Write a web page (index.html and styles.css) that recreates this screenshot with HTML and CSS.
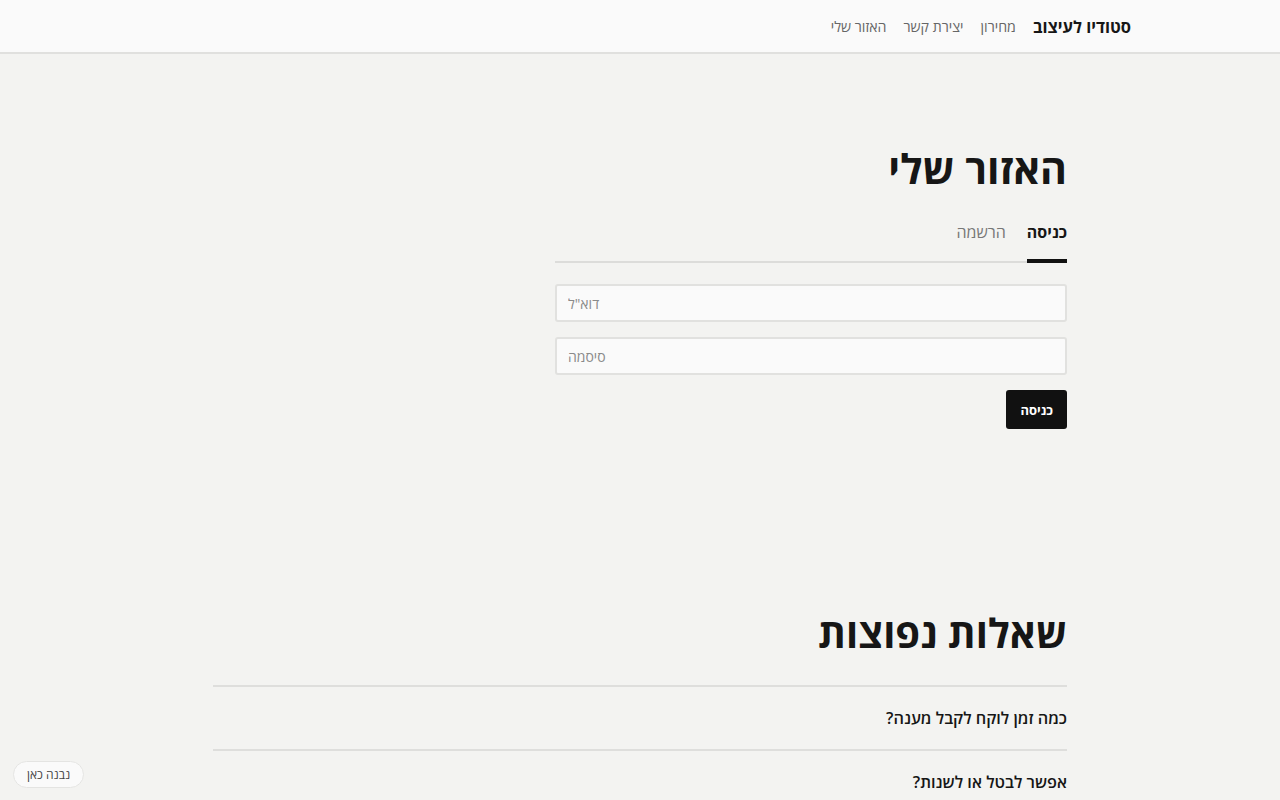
FILE: index.html
```
<!DOCTYPE html>
<html lang="he" dir="rtl">
<head>
    <meta charset="UTF-8">
    <title>האזור שלי - סטודיו לעיצוב</title>
    <link rel="stylesheet" href="styles.css">
</head>
<body>
<header class="topbar">
    <div class="topbar-inner">
        <a class="brand" href="#">סטודיו לעיצוב</a>
        <nav class="nav">
            <a href="#">מחירון</a>
            <a href="#">יצירת קשר</a>
            <a href="#">האזור שלי</a>
        </nav>
    </div>
</header>

<main class="page">
    <section class="account">
        <h1 class="title">האזור שלי</h1>
        <div class="tabs">
            <button class="tab active">כניסה</button>
            <button class="tab">הרשמה</button>
        </div>
        <form class="login">
            <input class="field" type="email" placeholder="דוא&quot;ל">
            <input class="field" type="password" placeholder="סיסמה">
            <div class="actions">
                <button class="submit" type="button">כניסה</button>
            </div>
        </form>
    </section>

    <section class="faq">
        <h2 class="title">שאלות נפוצות</h2>
        <ul class="faq-list">
            <li class="faq-item">כמה זמן לוקח לקבל מענה?</li>
            <li class="faq-item">אפשר לבטל או לשנות?</li>
        </ul>
    </section>
</main>

<a class="built" href="#">נבנה כאן</a>
</body>
</html>
```

FILE: styles.css
```
* {
    margin: 0;
    padding: 0;
    box-sizing: border-box;
}
ul {
    list-style: none;
}
a {
    text-decoration: none;
    color: inherit;
}
body {
    font-family: "Open Sans", "Noto Sans", "Liberation Sans", sans-serif;
    background-color: #f3f3f1;
    color: #161616;
}

/* top bar */
.topbar {
    height: 54px;
    background-color: #fafafa;
    border-bottom: 2px solid #e0e0de;
}
.topbar-inner {
    max-width: 982px;
    margin: 0 auto;
    height: 52px;
    display: flex;
    align-items: center;
    gap: 17px;
}
.brand {
    font-size: 16.5px;
    font-weight: 700;
    color: #161616;
}
.nav {
    display: flex;
    gap: 17px;
}
.nav a {
    font-size: 14.2px;
    color: #666;
}

/* main column */
.page {
    max-width: 854px;
    margin: 0 auto;
}
.title {
    font-size: 40px;
    font-weight: 700;
    line-height: 1.2;
}
.account .title {
    font-size: 41px;
    line-height: 48px;
}
.account {
    max-width: 512px;
    padding-top: 90px;
}
.tabs {
    margin-top: 23px;
    display: flex;
    gap: 21px;
    border-bottom: 2px solid #dcdcda;
}
.tab {
    font-family: inherit;
    font-size: 16px;
    background: none;
    border: none;
    color: #777;
    padding: 6px 0 16px;
    margin-bottom: -2px;
    border-bottom: 4px solid transparent;
    cursor: pointer;
}
.tab.active {
    color: #161616;
    font-weight: 700;
    border-bottom-color: #111;
}
.login {
    margin-top: 21px;
    display: flex;
    flex-direction: column;
    gap: 15px;
}
.field {
    font-family: inherit;
    font-size: 14px;
    height: 38px;
    padding: 0 11px;
    text-align: left;
    background-color: #fafafa;
    border: 2px solid #e1e1df;
    border-radius: 3px;
    color: #161616;
}
.field::placeholder {
    color: #8a8a8a;
}
.actions {
    display: flex;
}
.submit {
    font-family: inherit;
    font-size: 13px;
    font-weight: 700;
    color: #fff;
    background-color: #111;
    border: none;
    border-radius: 3px;
    height: 39px;
    padding: 0 14px;
    cursor: pointer;
}

/* faq */
.faq {
    padding-top: 180px;
}
.faq-list {
    margin-top: 28px;
}
.faq-item {
    border-top: 2px solid #dededc;
    height: 64px;
    display: flex;
    align-items: center;
    font-size: 16.3px;
    font-weight: 600;
}

/* badge */
.built {
    position: fixed;
    left: 13px;
    bottom: 12px;
    font-size: 12px;
    color: #444;
    background-color: #fafafa;
    border: 1px solid #e4e4e2;
    border-radius: 14px;
    padding: 4px 13px;
}
```
